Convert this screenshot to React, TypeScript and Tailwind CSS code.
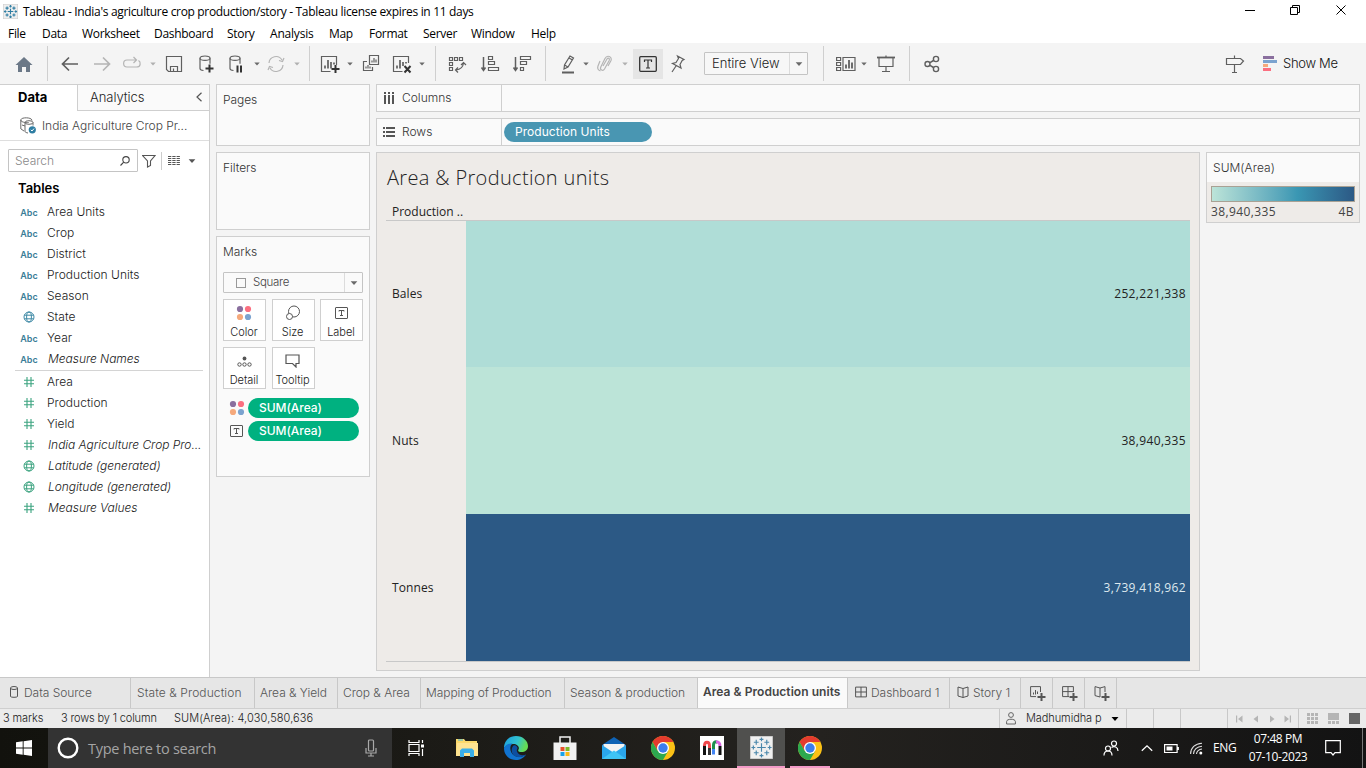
import React from "react";

type P = { className?: string; children?: React.ReactNode };

const Ic = ({ className = "", children, s = 20 }: P & { s?: number }) => (
  <svg viewBox={`0 0 ${s} ${s}`} fill="none" stroke="#5f5f5f" strokeWidth="1.2" className={`shrink-0 ${className}`}>
    {children}
  </svg>
);

const Caret = ({ className = "", color = "#6a6a6a" }: { className?: string; color?: string }) => (
  <svg viewBox="0 0 6 4" className={`h-[4px] w-[6px] shrink-0 ${className}`}>
    <path d="M0.3 0.5h5.4L3 3.6z" fill={color} />
  </svg>
);

const Sep = ({ className = "" }: P) => <div className={`h-[35px] w-px shrink-0 bg-[#cfcfcf] ${className}`} />;

const Cylinder = () => (
  <>
    <ellipse cx="9" cy="4.2" rx="5" ry="2.2" />
    <path d="M4 4.2v10.300c0 1 1.500 1.800 3.500 2M14 4.200v5.500" />
  </>
);

const Dots = ({ className = "" }: P) => (
  <svg viewBox="0 0 16 16" className={`shrink-0 ${className}`}>
    <circle cx="4" cy="4" r="3.100" fill="#8a6f9e" />
    <circle cx="12" cy="4" r="3.100" fill="#fb6f80" />
    <circle cx="4" cy="12" r="3.100" fill="#f5a97c" />
    <circle cx="12" cy="12" r="3.100" fill="#7ba3cf" />
  </svg>
);

const TBox = ({ className = "" }: P) => (
  <svg viewBox="0 0 13 12" fill="none" stroke="#555" className={`shrink-0 ${className}`}>
    <rect x="0.5" y="0.5" width="12" height="11" rx="0.500" />
    <path d="M4 4.500v-1h5v1M6.500 3.500v5M5 8.500h3" />
  </svg>
);

const Toolbar = () => {
  const i = "h-5 w-5";
  return (
    <div className="flex h-[41px] items-center bg-[#f4f4f4]">
      <Ic className={`${i} ml-[14px]`}>
        <path d="M10 3 1.500 11H4v7h4v-5h4v5h4v-7h2.500z" fill="#6b7887" stroke="none" />
      </Ic>
      <Sep className="ml-[13px]" />
      <Ic className={`${i} ml-[12px]`}><path d="M18 10H3M9 3.500 2.500 10 9 16.500" strokeWidth="1.700" /></Ic>
      <Ic className={`${i} ml-[12px]`}><path d="M2 10h15M11 3.500l6.500 6.500-6.500 6.500" stroke="#b4b4b4" strokeWidth="1.700" /></Ic>
      <Ic className={`${i} ml-[10px]`}>
        <path d="M14 6H5C0.500 6 0.500 13 5 13h9.500c4.500 0 4.500-5 2-6.500M11.500 3l3 3-3 3" stroke="#b4b4b4" />
      </Ic>
      <Caret className="ml-[8px]" color="#b0b0b0" />
      <Ic className={`${i} ml-[8px]`}>
        <path d="M2.500 2.500h15v15h-13l-2-2zM6.500 17.500v-5h7v5M9.500 17.500v-3" />
      </Ic>
      <Ic className={`${i} ml-[12px]`}>
        <Cylinder />
        <path d="M13.500 10.500v8M9.500 14.500h8" stroke="#333" strokeWidth="2" />
      </Ic>
      <Ic className={`${i} ml-[10px]`}>
        <Cylinder />
        <path d="M11.500 11.500v7M15 11.500v7" stroke="#333" strokeWidth="2" />
      </Ic>
      <Caret className="ml-[8px]" />
      <Ic className={`${i} ml-[6px]`}>
        <path d="M3 9a7 7 0 0 1 13-3M17 11a7 7 0 0 1-13 3M18 4l-1.500 3.500L13 6.500M2 16l1.500-3.500L7 13.500" stroke="#b4b4b4" />
      </Ic>
      <Caret className="ml-[8px]" color="#b0b0b0" />
      <Sep className="ml-[9px]" />
      <Ic className={`${i} ml-[10px]`}>
        <path d="M16.500 11V2.500h-15v15h9" />
        <path d="M5 14.500v-3M8 14.500V6M11 14.500V8M14 10.500v-2" strokeWidth="1.700" />
        <path d="M15.500 11v8M11.500 15h8" stroke="#333" strokeWidth="2" />
      </Ic>
      <Caret className="ml-[7px]" />
      <Ic className={`${i} ml-[8px]`}>
        <path d="M8.500 1.500h9v9h-9zM6 7.500H2.500v9h9V13" />
        <path d="M11 8.500v-2M13 8.500V4M15 8.500V5.500M5 14.500v-2M7 14.500V11M9 14.500v-2" />
      </Ic>
      <Ic className={`${i} ml-[11px]`}>
        <path d="M16.500 9V2.500h-15v15h9" />
        <path d="M5 14.500v-3M8 14.500V6M11 12V8M14 9.500V8" strokeWidth="1.700" />
        <path d="m12.500 12 6 6.500M18.500 12l-6 6.500" stroke="#333" strokeWidth="2" />
      </Ic>
      <Caret className="ml-[7px]" />
      <Sep className="ml-[10px]" />
      <Ic className={`${i} ml-[11px]`}>
        <path d="M2.500 3.500h3v3h-3zM7.500 3.500h3v3h-3zM12.500 3.500h3v3h-3zM2.500 8.500h3v3h-3zM2.500 13.500h3v3h-3zM9 16c5-.5 7-3 7.500-7M14 11l2.500-2.500L19 11M11 13.500 8.500 16l2.500 2.500" />
      </Ic>
      <Ic className={`${i} ml-[13px]`}>
        <path d="M3.500 3v13M1.500 13.500l2 3 2-3" strokeWidth="1.500" />
        <path d="M8.500 2.500h4v3h-4zM8.500 7.500h6v3h-6zM8.500 13.500h10v3h-10z" />
      </Ic>
      <Ic className={`${i} ml-[12px]`}>
        <path d="M3.500 3v13M1.500 13.500l2 3 2-3" strokeWidth="1.500" />
        <path d="M8.500 2.500h10v3h-10zM8.500 7.500h6v3h-6zM8.500 13.500h3v3h-3z" />
      </Ic>
      <Sep className="ml-[13px]" />
      <Ic className={`${i} ml-[12px]`}>
        <path d="m6 15 .5-4L12 2l3.500 2L10 13zM6.500 11l3.500 2M11 4l3.500 2" />
        <path d="M4 18.500h12" strokeWidth="2" />
      </Ic>
      <Caret className="ml-[5px]" />
      <Ic className={`${i} ml-[6px]`}>
        <path d="m8 12 4-7c1-1.500 3-.5 2.300 1.200L9.500 15c-1.500 2.500-5 1-3.700-2L10 4.500C12 .5 17.500 2.500 16 6.500L13 12M5 7l-2 5c-1 3 1 4.500 2.500 5" stroke="#b4b4b4" />
      </Ic>
      <Caret className="ml-[7px]" color="#b0b0b0" />
      <div className="ml-[5px] flex h-[30px] w-[30px] items-center justify-center bg-[#e5e5e5]">
        <svg viewBox="0 0 18 16" className="h-[16px] w-[18px]" fill="none" stroke="#333">
          <rect x="0.700" y="0.700" width="16.600" height="14.600" rx="1" strokeWidth="1.300" />
          <path d="M5.500 6V4h7v2M9 4v8M7 12h4" strokeWidth="1.200" />
        </svg>
      </div>
      <Ic className={`${i} ml-[4px]`}>
        <path d="m10.500 2 6.500 3.500-1.800 1L13 10.500l1 3.500-8.500-4.500 3.500-1L11.500 4.500zM9 12l-4 6" />
      </Ic>
      <div className="ml-[17px] flex h-[23px] w-[104px] items-center rounded-[1px] border border-[#c4c4c4] bg-[#f7f7f7]">
        <span className="w-[84px] pl-[7px] text-[13px] font-light tracking-[0px] text-[#222]">Entire View</span>
        <div className="flex h-full flex-1 items-center justify-center border-l border-[#dcdcdc]">
          <Caret className="scale-125" />
        </div>
      </div>
      <Sep className="ml-[15px]" />
      <Ic className={`${i} ml-[12px]`}>
        <path d="M.6 3.500h4v3h-4zM.6 8.500h4v3h-4zM.6 13.500h4v3h-4zM7 3.500h12v13H7z" />
        <path d="M10 14.500v-4M13 14.500V6M16 14.500V8.500" strokeWidth="1.800" />
      </Ic>
      <Caret className="ml-[5px]" />
      <Ic className={`${i} ml-[9px]`}>
        <path d="M1 3.500h18" strokeWidth="1.800" />
        <path d="M3 4v8.500h14V4M10 1.500V4M10 12.500v5M6 17.500h8" />
      </Ic>
      <Sep className="ml-[13px]" />
      <Ic className={`${i} ml-[12px]`}>
        <circle cx="5.500" cy="10" r="2.500" strokeWidth="1.400" />
        <circle cx="14" cy="5" r="2.600" strokeWidth="1.400" />
        <circle cx="14" cy="15" r="2.600" strokeWidth="1.400" />
        <path d="m8 8.700 3.500-2.200M8 11.300l3.500 2.200" strokeWidth="1.500" />
      </Ic>
      <Ic className={`${i} ml-[283px]`}>
        <path d="M1.500 4.500h14L18.500 7l-3 3.500h-14zM9.500 1.500v3M9.500 10.500v8M7 18.500h5" />
      </Ic>
      <svg viewBox="0 0 14 16" className="ml-[18px] h-[16px] w-[14px]">
        <rect y="0" width="11" height="3" fill="#8a6f9e" />
        <rect y="4" width="14" height="3" fill="#7ba3cf" />
        <rect y="8" width="5" height="3" fill="#f5a97c" />
        <rect y="12" width="8" height="3" fill="#fb6f80" />
      </svg>
      <span className="ml-[6px] text-[13px] font-[350] tracking-[-0.3px] whitespace-nowrap text-[#111]">Show Me</span>
    </div>
  );
};

const Globe = ({ c }: { c: string }) => (
  <svg viewBox="0 0 12 12" className="h-[12px] w-[12px]" fill="none" stroke={c}>
    <circle cx="6" cy="6" r="5" />
    <ellipse cx="6" cy="6" rx="2.400" ry="5" />
    <path d="M1.300 4.200h9.400M1.300 7.800h9.400" />
  </svg>
);

const Hash = () => (
  <svg viewBox="0 0 12 12" className="h-[12px] w-[12px]" fill="none" stroke="#3ba37f" strokeWidth="1.100">
    <path d="M4 1v10M8 1v10M1 4.200h10M1 7.800h10" />
  </svg>
);

const Field = ({ k, name, it }: { k: "abc" | "geo" | "num" | "mgeo"; name: string; it?: boolean }) => (
  <div className="flex h-[21px] items-center">
    <div className="flex w-[47px] items-center justify-center pl-[11px]">
      {k === "abc" && <span className="pt-[2px] text-[9px] leading-none font-semibold text-[#3a7d98]">Abc</span>}
      {k === "geo" && <Globe c="#3f8aa6" />}
      {k === "mgeo" && <Globe c="#3ba37f" />}
      {k === "num" && <Hash />}
    </div>
    <span className={`text-[12px] font-[350] whitespace-nowrap text-[#1a1a1a] ${it ? "pl-px tracking-[-0.04px] italic" : "tracking-[0.03px]"}`}>{name}</span>
  </div>
);

const Sidebar = () => (
  <div className="flex w-[210px] shrink-0 flex-col border-t border-r border-[#cfcfcf] bg-white">
    <div className="flex h-[26px]">
      <div className="w-[77px] pt-[3px] pl-[18px] text-[13px] font-bold text-black">Data</div>
      <div className="flex flex-1 justify-between border-b border-l border-[#cfcfcf] bg-[#fafafa] pt-[3px] pr-[6px] pl-[12px]">
        <span className="text-[13px] font-[350] tracking-[-0.05px] text-[#222]">Analytics</span>
        <svg viewBox="0 0 8 10" className="mt-[4px] h-[10px] w-[8px]" fill="none" stroke="#555" strokeWidth="1.200">
          <path d="M6.500.8 2 5l4.500 4.200" />
        </svg>
      </div>
    </div>
    <div className="flex h-[30px] items-center border-b border-[#dedede] pl-[20px]">
      <svg viewBox="0 0 16 17" className="h-[17px] w-[16px]" fill="none" stroke="#6a6a6a">
        <path d="M.8 3v9M12 3.500C12 0 .8 0 .8 3s8 2.500 8 2.500" />
        <ellipse cx="9" cy="5.500" rx="4" ry="1.800" />
        <path d="M5 5.500v9c0 .7 1.500 1.300 3 1.500M13 5.500v3M2 8l3 1M1 12l3 2" />
        <circle cx="12.300" cy="12.800" r="3.600" fill="#2f7ea3" stroke="none" />
        <path d="m10.800 12.800 1.200 1.200 2-2.400" stroke="#fff" />
      </svg>
      <span className="ml-[6px] text-[12px] font-[350] tracking-[-0.04px] text-[#444]">India Agriculture Crop Pr...</span>
    </div>
    <div className="mt-[8px] flex h-[23px] items-center pl-[8px]">
      <div className="flex h-[23px] w-[130px] items-center justify-between rounded-[1px] border border-[#c4c4c4] pr-[7px] pl-[6px]">
        <span className="text-[12px] font-light text-[#888]">Search</span>
        <svg viewBox="0 0 10 10" className="h-[10px] w-[10px]" fill="none" stroke="#444" strokeWidth="1.100">
          <circle cx="6" cy="3.800" r="3.200" />
          <path d="M3.700 6.200.5 9.500" />
        </svg>
      </div>
      <svg viewBox="0 0 14 14" className="ml-[4px] h-[14px] w-[14px]" fill="none" stroke="#555" strokeWidth="1.100">
        <path d="M.6 1.500h12.400L8.500 7v4.500l-3 1.500V7z" />
      </svg>
      <div className="ml-[5px] h-[18px] w-px bg-[#ccc]" />
      <svg viewBox="0 0 12 11" className="ml-[6px] h-[11px] w-[12px]" stroke="#555" strokeDasharray="3.300 1">
        <path d="M0 1.500h12M0 3.500h12M0 5.500h12M0 7.500h12M0 9.500h12" />
      </svg>
      <Caret className="ml-[9px] scale-125" color="#555" />
    </div>
    <div className="mt-[7px] h-[22px] pl-[18px] text-[13px] font-semibold text-black">Tables</div>
    <Field k="abc" name="Area Units" />
    <Field k="abc" name="Crop" />
    <Field k="abc" name="District" />
    <Field k="abc" name="Production Units" />
    <Field k="abc" name="Season" />
    <Field k="geo" name="State" />
    <Field k="abc" name="Year" />
    <Field k="abc" name="Measure Names" it />
    <div className="mt-px mr-[6px] ml-[15px] h-px bg-[#d4d4d4]" />
    <Field k="num" name="Area" />
    <Field k="num" name="Production" />
    <Field k="num" name="Yield" />
    <Field k="num" name="India Agriculture Crop Pro..." it />
    <Field k="mgeo" name="Latitude (generated)" it />
    <Field k="mgeo" name="Longitude (generated)" it />
    <Field k="num" name="Measure Values" it />
  </div>
);

const MarkBtn = ({ label, children }: { label: string; children: React.ReactNode }) => (
  <div className="flex h-[42px] w-[43px] flex-col items-center border border-[#cfcfcf] bg-white pr-px">
    <div className="flex h-[26px] items-center">{children}</div>
    <span className="-mt-px text-[11px] leading-[14px] font-[350] whitespace-nowrap text-[#1a1a1a]">{label}</span>
  </div>
);

const Pill = ({ text }: { text: string }) => (
  <div className="h-[20px] w-[111px] rounded-full bg-[#00b180] pl-[11px] text-[12px] leading-[20px] font-medium text-white">{text}</div>
);

const Card = ({ className = "", children }: P) => (
  <div className={`border border-[#cfcfcf] bg-[#fafafa] px-[6px] text-[12px] font-[350] tracking-[-0.05px] text-[#333] ${className}`}>{children}</div>
);

const Cards = () => (
  <div className="ml-[6px] flex w-[154px] shrink-0 flex-col gap-[6px]">
    <Card className="h-[62px] pt-[6px]">Pages</Card>
    <Card className="h-[78px] pt-[6px]">Filters</Card>
    <Card className="h-[241px] pt-[6px]">
      <div className="h-[29px]">Marks</div>
      <div className="flex h-[21px] items-center rounded-[1px] border border-[#c4c4c4]">
        <div className="ml-[12px] h-[10px] w-[10px] border border-[#999]" />
        <span className="ml-[7px] flex-1 pt-px text-[11.5px] tracking-[-0.3px] text-[#444]">Square</span>
        <div className="flex h-full w-[18px] items-center justify-center border-l border-[#dcdcdc]"><Caret className="scale-125" /></div>
      </div>
      <div className="mt-[6px] grid grid-cols-3 gap-x-[5.500px] gap-y-[6px]">
        <MarkBtn label="Color"><Dots className="h-[16px] w-[16px]" /></MarkBtn>
        <MarkBtn label="Size">
          <svg viewBox="0 0 16 16" className="h-[16px] w-[16px]" fill="none" stroke="#555">
            <circle cx="9" cy="6.500" r="5.500" />
            <circle cx="4.500" cy="11.500" r="3" fill="#fff" />
          </svg>
        </MarkBtn>
        <MarkBtn label="Label"><TBox className="h-[12px] w-[13px]" /></MarkBtn>
        <MarkBtn label="Detail">
          <svg viewBox="0 0 15 12" className="mt-[2px] h-[12px] w-[15px]" fill="none" stroke="#555">
            <circle cx="7.500" cy="2.500" r="1.900" fill="#555" stroke="none" />
            <circle cx="2.500" cy="8.500" r="1.700" />
            <circle cx="7.500" cy="8.500" r="1.700" />
            <circle cx="12.500" cy="8.500" r="1.700" />
          </svg>
        </MarkBtn>
        <MarkBtn label="Tooltip">
          <svg viewBox="0 0 15 14" className="h-[14px] w-[15px]" fill="none" stroke="#555" strokeWidth="1.200">
            <path d="M1 1h13v8.500h-3V13L7.500 9.500H1z" />
          </svg>
        </MarkBtn>
      </div>
      <div className="mt-[9px] flex items-center pl-[6px]"><Dots className="mr-[3px] h-[16px] w-[16px]" /><Pill text="SUM(Area)" /></div>
      <div className="mt-[3px] flex items-center pl-[7px]"><TBox className="mr-[5px] h-[12px] w-[13px]" /><Pill text="SUM(Area)" /></div>
    </Card>
  </div>
);

const Band = ({ label, value, bg, h }: { label: string; value: string; bg: string; h: string }) => (
  <div className={`flex items-center ${h}`}>
    <span className="w-[80px] pl-[6px] text-[12px] tracking-[0.1px] text-[#222]">{label}</span>
    <div className={`flex h-full flex-1 items-center justify-end pr-[4px] text-[12px] tracking-[0.35px] ${bg}`}>{value}</div>
  </div>
);

const Worksheet = () => (
  <div className="ml-[6px] flex w-[984px] shrink-0 flex-col gap-[6px]">
    <div className="flex h-[28px] border border-[#cfcfcf] bg-[#fafafa]">
      <div className="flex w-[125px] items-center border-r border-[#cfcfcf] pl-[6px] text-[12px] font-[350] text-[#333]">
        <svg viewBox="0 0 12 12" className="mr-[7px] h-[12px] w-[12px]" stroke="#555" strokeWidth="2">
          <path d="M2 0v2M6 0v2M10 0v2M2 3v9M6 3v9M10 3v9" />
        </svg>
        <span>Columns</span>
      </div>
    </div>
    <div className="flex h-[28px] border border-[#cfcfcf] bg-[#fafafa]">
      <div className="flex w-[125px] items-center border-r border-[#cfcfcf] pl-[6px] text-[12px] font-[350] text-[#333]">
        <svg viewBox="0 0 12 12" className="mr-[7px] h-[12px] w-[12px]" stroke="#555" strokeWidth="2">
          <path d="M0 2h2M0 6h2M0 10h2M3 2h9M3 6h9M3 10h9" />
        </svg>
        <span>Rows</span>
      </div>
      <div className="mt-[3px] ml-[2px] h-[20px] w-[148px] rounded-full bg-[#4996b2] pl-[11px] text-[12px] leading-[20px] tracking-[0.05px] text-white">
        Production Units
      </div>
    </div>
    <div className="flex items-start gap-[6px]">
      <div className="flex h-[519px] w-[824px] flex-col border border-[#cfcfcf] bg-[#eeebe8] pl-[9px] font-['Open_Sans',sans-serif]">
        <div className="h-[50px] pt-[11px] pl-px text-[20px] leading-[28px] font-light tracking-[0.34px] text-[#222]">Area &amp; Production units</div>
        <div className="h-[17px] pl-[6px] text-[12px] leading-[17px] text-[#222]">Production ..</div>
        <div className="flex h-[442px] w-[804px] flex-col border-y border-[#c8c8c8]">
          <Band h="h-[146px]" label="Bales" value="252,221,338" bg="bg-[#afddd7] text-[#222]" />
          <Band h="h-[147px]" label="Nuts" value="38,940,335" bg="bg-[#bce4d8] text-[#222]" />
          <Band h="h-[147px]" label="Tonnes" value="3,739,418,962" bg="bg-[#2c5985] text-[#dfe9ef]" />
        </div>
      </div>
      <div className="h-[71px] w-[154px] border border-[#cfcfcf] bg-[#eeebe8] text-[12px] text-[#444]">
        <div className="h-[29px] bg-[#fafafa] pl-[6px] leading-[30px] font-[350] tracking-[0.05px] text-[#333]">SUM(Area)</div>
        <div className="mx-[4px] mt-[4px] h-[16px] border border-[#a9a194] bg-linear-to-r from-[#bce4d8] via-[#3a97b3] via-60% to-[#2c5985]" />
        <div className="flex justify-between pr-[5px] pl-[4px] font-['Open_Sans',sans-serif] leading-[19px] tracking-[0.4px]"><span>38,940,335</span><span>4B</span></div>
      </div>
    </div>
  </div>
);

const Tab = ({ className = "", children }: P) => (
  <div className={`flex h-full shrink-0 items-center border-r border-[#c8c8c8] whitespace-nowrap ${className}`}>{children}</div>
);

const Grid4 = () => <path d="M.6 1.100h10.800v9.800H.6zM6 1v10M.6 6h10.800" />;
const Book = () => <path d="M6 2.500 1 1v9l5 1.500L11 10V1zM6 2.500v9" />;
const Plus = () => <path d="M11.500 7v8M7.500 11h8" strokeWidth="2" />;

const Tabs = () => (
  <div className="flex h-[31px] border-t border-[#c8c8c8] bg-[#e6e6e6] text-[12px] font-[350] tracking-[-0.04px] text-[#555]">
    <Tab className="w-[131px] pl-[10px]">
      <svg viewBox="0 0 8 12" className="mr-[6px] -mt-[2px] h-[12px] w-[8px]" fill="none" stroke="#555">
        <ellipse cx="4" cy="2" rx="3.500" ry="1.500" /><path d="M.5 2v8.500C1 11.600 7 11.600 7.500 10.500V2" />
      </svg>
      Data Source
    </Tab>
    <Tab className="w-[124px] pl-[6px] tracking-[0.1px]">State &amp; Production</Tab>
    <Tab className="w-[83px] pl-[5px]">Area &amp; Yield</Tab>
    <Tab className="w-[83px] pl-[5px]">Crop &amp; Area</Tab>
    <Tab className="w-[144px] pl-[5px] tracking-[-0.08px]">Mapping of Production</Tab>
    <Tab className="w-[133px] pl-[5px]">Season &amp; production</Tab>
    <Tab className="w-[150px] bg-[#fafafa] pb-[3px] pl-[5px] font-semibold tracking-[0.05px] text-[#444]">Area &amp; Production units</Tab>
    <Tab className="w-[102px] pl-[7px]">
      <svg viewBox="0 0 12 12" className="mr-[4px] -mt-[2px] h-[12px] w-[12px]" fill="none" stroke="#555"><Grid4 /></svg>
      Dashboard 1
    </Tab>
    <Tab className="w-[71px] pl-[7px]">
      <svg viewBox="0 0 12 12" className="mr-[4px] -mt-[2px] h-[12px] w-[12px]" fill="none" stroke="#555"><Book /></svg>
      Story 1
    </Tab>
    <Tab className="w-[32px] pl-[9px]">
      <svg viewBox="0 0 16 16" className="mt-[1px] h-[16px] w-[16px]" fill="none" stroke="#555">
        <path d="M10.500 6V.6H.6v10H6M3.500 8.500v-2M5.500 8.500V4M7.500 8V5.500" /><Plus />
      </svg>
    </Tab>
    <Tab className="w-[32px] pl-[9px]">
      <svg viewBox="0 0 16 16" className="mt-[1px] h-[16px] w-[16px]" fill="none" stroke="#555">
        <path d="M11.400 6V.6H.6v10H7M6 .6v10M.6 5.600h10.800" /><Plus />
      </svg>
    </Tab>
    <Tab className="w-[32px] pl-[9px]">
      <svg viewBox="0 0 16 16" className="mt-[1px] h-[16px] w-[16px]" fill="none" stroke="#555">
        <path d="M6 2 1 .6v9L6 11V2l5-1.400V6" /><Plus />
      </svg>
    </Tab>
  </div>
);

const Status = () => (
  <div className="flex h-[20px] items-stretch border-t border-[#cfcfcf] bg-[#ebebeb] text-[11px] leading-[19px] font-[350] whitespace-nowrap text-[#1a1a1a]">
    <span className="w-[58px] shrink-0 pl-[3px] tracking-[-0.1px]">3 marks</span>
    <span className="w-[113px] shrink-0 pl-[3px] tracking-[-0.15px]">3 rows by 1 column</span>
    <span className="w-[828px] shrink-0 pl-[3px] tracking-[0.08px]">SUM(Area): 4,030,580,636</span>
    <div className="flex w-[128px] items-center border-x border-[#c8c8c8] pl-[6px]">
      <svg viewBox="0 0 10 13" className="h-[13px] w-[10px]" fill="none" stroke="#666">
        <circle cx="5" cy="3" r="2.400" /><path d="M.6 12V9.500C.6 6.500 9.400 6.500 9.400 9.500V12z" />
      </svg>
      <span className="ml-[10px] w-[76px] tracking-[-0.08px]">Madhumidha p</span>
      <Caret className="ml-[10px] scale-130" color="#000" />
    </div>
    <div className="w-[27px] border-r border-[#c8c8c8]" />
    <div className="w-[27px] border-r border-[#c8c8c8]" />
    <div className="w-[47px] border-r border-[#c8c8c8]" />
    <div className="flex w-[71px] items-center border-r border-[#c8c8c8] pl-[8px]">
      <svg viewBox="0 0 56 8" className="h-[8px] w-[56px]" fill="#b5b5b5">
        <path d="M0 .5h1.200v7H0zM6.500 .5v7L2 4zM22 .5v7L17.500 4zM34 .5v7L38.500 4zM48.500 .5v7L53 4zM53.800 .5H55v7h-1.200z" />
      </svg>
    </div>
    <div className="flex items-center gap-[10px] pl-[8px]">
      <svg viewBox="0 0 11 11" className="h-[11px] w-[11px]" fill="#b5b5b5">
        <path d="M0 0h3v3H0zM4 0h3v3H4zM8 0h3v3H8zM0 4h3v3H0zM4 4h3v3H4zM8 4h3v3H8zM0 8h3v3H0zM4 8h3v3H4zM8 8h3v3H8z" />
      </svg>
      <svg viewBox="0 0 11 11" className="h-[11px] w-[11px]" fill="#b5b5b5"><path d="M0 0h11v7H0zM0 8h3v3H0zM4 8h3v3H4zM8 8h3v3H8z" /></svg>
      <div className="h-[11px] w-[11px] bg-[#666]" />
    </div>
  </div>
);

const Chrome = () => (
  <svg viewBox="0 0 24 24" className="h-[24px] w-[24px]">
    <circle cx="12" cy="12" r="12" fill="#fbc116" />
    <path d="M12 6h10.400A12 12 0 0 0 1.600 6l5.200 9z" fill="#e33b2e" />
    <path d="M1.600 6A12 12 0 0 0 12 24l5.200-9-10.400 0z" fill="#2da94f" />
    <circle cx="12" cy="12" r="6" fill="#fff" />
    <circle cx="12" cy="12" r="4.700" fill="#3b7ded" />
  </svg>
);

const TableauMark = () => (
  <path d="M12 7.500v9M7.500 12h9M12 1.500v4M10 3.500h4M12 18.500v4M10 20.500h4M3.500 10v4M1.500 12h4M20.500 10v4M18.500 12h4M6.500 4v5M4 6.500h5M17.500 4v5M15 6.500h5M6.500 15v5M4 17.500h5M17.500 15v5M15 17.500h5" />
);

const Task = ({ className = "", children }: P) => (
  <div className={`flex h-full shrink-0 items-center justify-center ${className}`}>{children}</div>
);

const Taskbar = () => (
  <div className="flex h-[40px] items-center bg-linear-to-r from-[#12120d] via-[#24221f] via-60% to-[#131313] font-['Open_Sans',sans-serif] text-white">
    <Task className="w-[48px]">
      <svg viewBox="0 0 16 16" className="h-[16px] w-[16px]" fill="#fff">
        <path d="M0 2.300 6.700 1.300v6.200H0zM7.600 1.200 16 0v7.500H7.600zM0 8.400h6.700v6.300L0 13.700zM7.600 8.400H16V16l-8.400-1.200z" />
      </svg>
    </Task>
    <div className="flex h-full w-[344px] shrink-0 items-center bg-[#333] pl-[9px]">
      <svg viewBox="0 0 22 22" className="h-[22px] w-[22px]" fill="none" stroke="#fff" strokeWidth="2.400"><circle cx="11" cy="11" r="9.300" /></svg>
      <span className="ml-[9px] flex-1 pt-px text-[14.5px] tracking-[-0.28px] text-[#a5a5a5]">Type here to search</span>
      <svg viewBox="0 0 12 18" className="mr-[15px] h-[18px] w-[12px]" fill="none" stroke="#aaa" strokeWidth="1.200">
        <rect x="3.500" y="1" width="5" height="11" rx="1" /><path d="M1 9v5h10V9M6 14v3M3 17h6" />
      </svg>
    </div>
    <Task className="w-[48px]">
      <svg viewBox="0 0 17 16" className="h-[16px] w-[17px]" fill="none" stroke="#fff" strokeWidth="1.200">
        <path d="M1 0v2.500h10V0M1 4.500h10v7H1zM1 16v-2.500h10V16M14.500 0v3M14.500 9v7" /><path d="M13 4.500h3v3h-3z" fill="#fff" stroke="none" />
      </svg>
    </Task>
    <Task className="ml-[2px] w-[49px]">
      <svg viewBox="0 0 22 20" className="h-[20px] w-[22px]">
        <path d="M0 1h8l1.500 2H21v15H0z" fill="#fbd96c" /><path d="M1 5h21v13H0z" fill="#fee391" />
        <path d="M2 2h5" stroke="#3fb4d8" /><path d="M4 19v-6.500l2-2h10l2 2V19h-4v-4H8v4z" fill="#3aaee8" />
      </svg>
    </Task>
    <Task className="w-[49px]">
      <svg viewBox="0 0 24 24" className="h-[24px] w-[24px]">
        <defs>
          <linearGradient id="eg" x1="0" y1="0" x2="1" y2="0.300"><stop offset="0" stopColor="#1b9de2" /><stop offset=".6" stopColor="#32c3cf" /><stop offset="1" stopColor="#65dd55" /></linearGradient>
        </defs>
        <path d="M0 12C0 5 5 0 12 0s12 5 12 10c0 4-3 6-6.500 6-2.500 0-4-1-3-2.500C16 11 13 8 9.500 8 5 8 1.500 10 0 12z" fill="url(#eg)" />
        <path d="M0 12c1.500-3.500 5-5 8.500-4.500C5 10 6 16.500 9.500 19c4 3 9 2 12.500-.5C20 22 16 24 12 24 5 24 0 19 0 12z" fill="#1173cf" />
        <path d="M9.500 9.500C7 12 7 17 10 19.500c4 3 9 1.500 12-1-3.500 1.500-8 .5-9-3-.5-1.500 0-2 .5-3 .5-1.500-2-4-4-3z" fill="#0d4fa0" />
      </svg>
    </Task>
    <Task className="w-[49px]">
      <svg viewBox="0 0 24 24" className="h-[24px] w-[24px]">
        <path d="M7 7V1h10v6" fill="none" stroke="#f2f2f2" strokeWidth="1.500" /><path d="M.5 6.500h23V24H.5z" fill="#f1f1f1" />
        <path d="M7.500 11h4v4h-4z" fill="#e8502a" /><path d="M12.500 11h4v4h-4z" fill="#7db928" /><path d="M7.500 16h4v4h-4z" fill="#1aa2e8" /><path d="M12.500 16h4v4h-4z" fill="#fbb813" />
      </svg>
    </Task>
    <Task className="w-[49px]">
      <svg viewBox="0 0 24 22" className="h-[22px] w-[24px]">
        <path d="M0 8 12 0l12 8v3H0z" fill="#0f63b5" /><path d="M1.500 7h21v8h-21z" fill="#f3f3f3" />
        <path d="M0 8v14h24V8l-12 8z" fill="#2aa6ec" /><path d="M0 22 12 13.500 24 22z" fill="#3fc3f5" />
      </svg>
    </Task>
    <Task className="w-[49px]"><Chrome /></Task>
    <Task className="w-[50px]">
      <svg viewBox="0 0 24 24" className="h-[24px] w-[24px]" fill="none" strokeWidth="3">
        <path d="M0 0h24v24H0z" fill="#fff" />
        <path d="M4.500 19V9" stroke="#111" /><path d="M4.500 10c0-5 5-5 5 0v3" stroke="#f0474b" /><path d="M9.500 12v7" stroke="#333" />
        <path d="M13.500 18.500v-9" stroke="#4285f4" /><path d="M13.500 13V9.500c0-4.500 3-4.500 4-2.500" stroke="#1d8f4e" /><path d="M16 6c2.500-.5 4 1 4 4" stroke="#d966e0" /><path d="M20 10v9" stroke="#111" />
      </svg>
    </Task>
    <Task className="w-[48px] border-b-2 border-[#f39ac7] bg-[#50504e]">
      <svg viewBox="0 0 24 24" className="h-[23px] w-[23px]" stroke="#4a87ab" strokeWidth="1.200" fill="none">
        <path d="M0 0h24v24H0z" fill="#f0f0f0" stroke="#aaa" /><TableauMark />
      </svg>
    </Task>
    <Task className="ml-[5px] w-[40px] border-b-2 border-[#f39ac7] pt-px"><Chrome /></Task>
    <svg viewBox="0 0 16 16" className="ml-[273px] h-[16px] w-[16px] shrink-0" fill="none" stroke="#fff" strokeWidth="1.200">
      <circle cx="11" cy="3.500" r="2.500" /><circle cx="5" cy="8.500" r="2.500" /><path d="M1 15.500c0-6 8-6 8 0M8.500 7.500C11 5.500 15 7 15 11" />
    </svg>
    <svg viewBox="0 0 12 8" className="ml-[22px] h-[8px] w-[12px] shrink-0" fill="none" stroke="#fff" strokeWidth="1.300"><path d="m.8 6.800 5.200-5 5.200 5" /></svg>
    <svg viewBox="0 0 15 9" className="ml-[11px] h-[9px] w-[15px] shrink-0" fill="none" stroke="#fff">
      <path d="M.6.600h12.500v8H.6zM14.300 3v3" strokeWidth="1.200" /><path d="M2.500 2.500h6v4h-6z" fill="#fff" stroke="none" />
    </svg>
    <svg viewBox="0 0 13 13" className="ml-[11px] h-[13px] w-[13px] shrink-0" fill="none" stroke="#ddd" strokeWidth="1.100">
      <path d="M.6 12C.6 6 5 1.500 12 1.200M3.500 12c0-4 3.500-7.500 8.500-7.800M6.500 12c0-2.500 2.500-4.800 5.500-5" /><circle cx="10.800" cy="11" r="1.500" fill="#fff" stroke="none" />
    </svg>
    <span className="ml-[10px] w-[24px] shrink-0 text-[12px] tracking-[-0.4px]">ENG</span>
    <div className="ml-[7px] w-[68px] shrink-0 text-center text-[12px] leading-[18px] tracking-[-0.4px] whitespace-nowrap">07:48 PM<br />07-10-2023</div>
    <svg viewBox="0 0 16 16" className="ml-[13px] h-[16px] w-[16px] shrink-0" fill="none" stroke="#fff" strokeWidth="1.200"><path d="M.7.700h14.600v12H10L8 15l-2-2.300H.7z" /></svg>
    <div className="ml-[21px] h-full w-px shrink-0 bg-[#777]" />
  </div>
);

export default function App() {
  return (
    <div className="flex h-[768px] w-[1366px] flex-col overflow-hidden bg-[#f4f4f4] font-['Inter',sans-serif]">
      <div className="flex h-[24px] items-center bg-white font-['Open_Sans',sans-serif] text-[12px] text-black">
        <svg viewBox="0 0 24 24" className="mb-[2px] ml-[3px] h-[15px] w-[15px] shrink-0" fill="none" stroke="#2f7ea3" strokeWidth="1.800">
          <path d="M0 0h24v24H0z" fill="#eee" stroke="#ccc" /><TableauMark />
        </svg>
        <span className="ml-[5px] flex-1 tracking-[-0.325px] whitespace-nowrap">Tableau - India's agriculture crop production/story - Tableau license expires in 11 days</span>
        <svg viewBox="0 0 102 12" className="mr-[19px] mb-[4px] h-[12px] w-[102px]" fill="none" stroke="#000">
          <path d="M0 6.500h10M45.500 3.500h7v7h-7zM47.500 3.500v-2h7v7h-2M91.500 1.500l9 9M100.500 1.500l-9 9" />
        </svg>
      </div>
      <div className="flex h-[19px] items-center bg-white pl-[8px] font-['Open_Sans',sans-serif] text-[12px] tracking-[-0.3px] whitespace-nowrap text-black">
        <span className="w-[34px]">File</span>
        <span className="w-[40px]">Data</span>
        <span className="w-[72px]">Worksheet</span>
        <span className="w-[73px] tracking-[-0.3px]">Dashboard</span>
        <span className="w-[43px]">Story</span>
        <span className="w-[59px] tracking-[-0.2px]">Analysis</span>
        <span className="w-[40px]">Map</span>
        <span className="w-[54px]">Format</span>
        <span className="w-[48px]">Server</span>
        <span className="w-[60px]">Window</span>
        <span>Help</span>
      </div>
      <Toolbar />
      <div className="flex h-[593px]">
        <Sidebar />
        <Cards />
        <Worksheet />
      </div>
      <Tabs />
      <Status />
      <Taskbar />
    </div>
  );
}
